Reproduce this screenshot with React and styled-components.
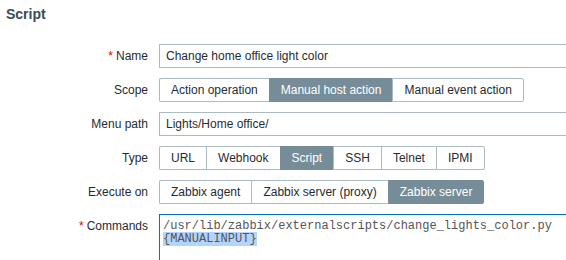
import React from "react";
import styled, { createGlobalStyle } from "styled-components";

const Global = createGlobalStyle`
  html, body { margin: 0; padding: 0; background: #fff; overflow: hidden; }
  body { font-family: "Liberation Sans", Arial, sans-serif; font-size: 12px; color: #1f2c33; }
`;

const Page = styled.div`
  width: 566px;
  height: 260px;
  overflow: hidden;
  box-sizing: border-box;
  padding: 6px 0 0 0;
`;

const Title = styled.h1`
  margin: 0 0 0 6px;
  font-size: 14px;
  line-height: 16px;
  font-weight: bold;
  color: #384b56;
`;

const Form = styled.div`
  display: grid;
  grid-template-columns: 148px auto;
  column-gap: 11px;
  row-gap: 10px;
  margin-top: 22px;
  align-items: start;
`;

const Label = styled.label`
  text-align: right;
  line-height: 24px;
  white-space: nowrap;
  color: #1f2c33;
  &::before {
    content: ${(p) => (p.$required ? "'*'" : "none")};
    color: #d40000;
    margin-right: 3px;
  }
`;

const Input = styled.div`
  box-sizing: border-box;
  width: 453px;
  height: 24px;
  line-height: 22px;
  border: 1px solid #acbbc2;
  padding: 0 6px;
  background: #fff;
  color: #1f2c33;
  white-space: nowrap;
`;

const Segments = styled.div`
  display: inline-flex;
  justify-self: start;
`;

const Segment = styled.div`
  box-sizing: border-box;
  height: 24px;
  line-height: 22px;
  padding: 0 11px;
  border: 1px solid ${(p) => (p.$active ? "#768d99" : "#acbbc2")};
  border-right: none;
  background: ${(p) => (p.$active ? "#768d99" : "#fff")};
  color: ${(p) => (p.$active ? "#fff" : "#1f2c33")};
  white-space: nowrap;
  &:first-child { border-radius: 2px 0 0 2px; }
  &:last-child {
    border-right: 1px solid ${(p) => (p.$active ? "#768d99" : "#acbbc2")};
    border-radius: 0 2px 2px 0;
  }
`;

const TextArea = styled.div`
  box-sizing: border-box;
  width: 453px;
  height: 70px;
  border: 1px solid #0275b8;
  padding: 5px 3px;
  font-family: "Liberation Mono", "Courier New", monospace;
  font-size: 12px;
  line-height: 13px;
  color: #555;
  white-space: pre;
`;

const Selected = styled.span`
  background: #b3d4fc;
`;

function SegmentGroup({ items, active }) {
  return (
    <Segments>
      {items.map((it) => (
        <Segment key={it} $active={it === active}>
          {it}
        </Segment>
      ))}
    </Segments>
  );
}

export default function App() {
  return (
    <Page>
      <Global />
      <Title>Script</Title>
      <Form>
        <Label $required>Name</Label>
        <Input>Change home office light color</Input>

        <Label>Scope</Label>
        <SegmentGroup
          items={["Action operation", "Manual host action", "Manual event action"]}
          active="Manual host action"
        />

        <Label>Menu path</Label>
        <Input>Lights/Home office/</Input>

        <Label>Type</Label>
        <SegmentGroup
          items={["URL", "Webhook", "Script", "SSH", "Telnet", "IPMI"]}
          active="Script"
        />

        <Label>Execute on</Label>
        <SegmentGroup
          items={["Zabbix agent", "Zabbix server (proxy)", "Zabbix server"]}
          active="Zabbix server"
        />

        <Label $required>Commands</Label>
        <TextArea>
          {"/usr/lib/zabbix/externalscripts/change_lights_color.py\n"}
          <Selected>{"{MANUALINPUT}"}</Selected>
        </TextArea>
      </Form>
    </Page>
  );
}
